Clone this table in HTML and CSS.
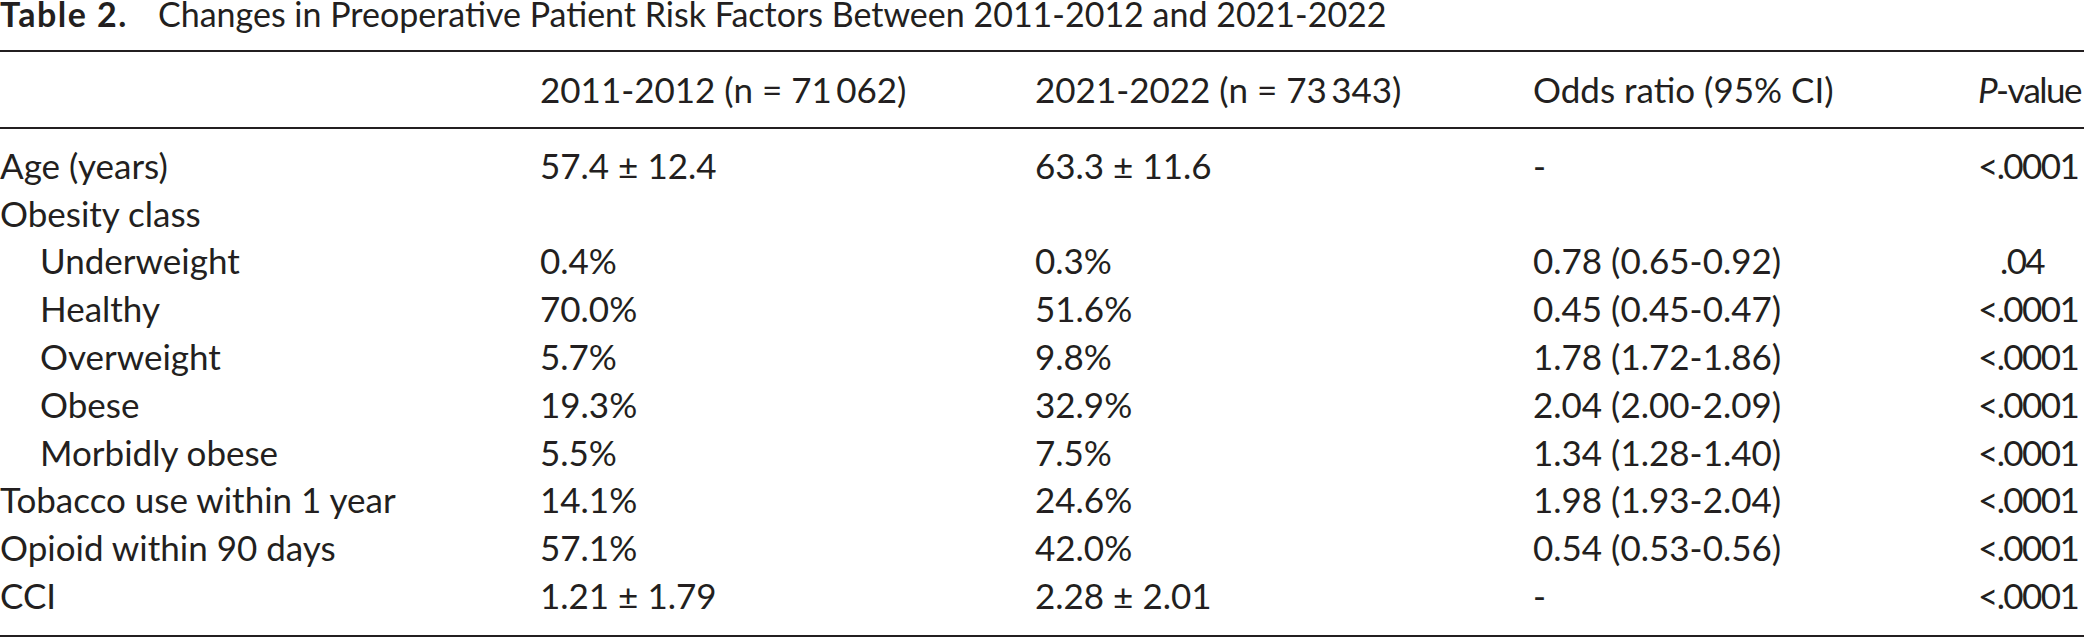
FILE: index.html
```html
<!DOCTYPE html>
<html lang="en">
<head>
<meta charset="utf-8">
<title>Table 2</title>
<link rel="stylesheet" href="styles.css">
</head>
<body>
<div class="page">
  <p class="caption"><span class="label">Table 2.</span><span class="caption-text">Changes in Preoperative Patient Risk Factors Between 2011-2012 and 2021-2022</span></p>
  <table class="data">
    <colgroup>
      <col class="c1"><col class="c2"><col class="c3"><col class="c4"><col class="c5">
    </colgroup>
    <thead>
      <tr>
        <th></th>
        <th>2011-2012 (n = 71&#8201;062)</th>
        <th>2021-2022 (n = 73&#8201;343)</th>
        <th>Odds ratio (95% CI)</th>
        <th class="pv"><i>P</i>-value</th>
      </tr>
    </thead>
    <tbody>
      <tr><td>Age (years)</td><td>57.4 ± 12.4</td><td>63.3 ± 11.6</td><td>-</td><td class="pv">&lt;.0001</td></tr>
      <tr><td>Obesity class</td><td></td><td></td><td></td><td class="pv"></td></tr>
      <tr><td class="sub">Underweight</td><td>0.4%</td><td>0.3%</td><td>0.78 (0.65-0.92)</td><td class="pv short">.04</td></tr>
      <tr><td class="sub">Healthy</td><td>70.0%</td><td>51.6%</td><td>0.45 (0.45-0.47)</td><td class="pv">&lt;.0001</td></tr>
      <tr><td class="sub">Overweight</td><td>5.7%</td><td>9.8%</td><td>1.78 (1.72-1.86)</td><td class="pv">&lt;.0001</td></tr>
      <tr><td class="sub">Obese</td><td>19.3%</td><td>32.9%</td><td>2.04 (2.00-2.09)</td><td class="pv">&lt;.0001</td></tr>
      <tr><td class="sub">Morbidly obese</td><td>5.5%</td><td>7.5%</td><td>1.34 (1.28-1.40)</td><td class="pv">&lt;.0001</td></tr>
      <tr><td>Tobacco use within 1 year</td><td>14.1%</td><td>24.6%</td><td>1.98 (1.93-2.04)</td><td class="pv">&lt;.0001</td></tr>
      <tr><td>Opioid within 90 days</td><td>57.1%</td><td>42.0%</td><td>0.54 (0.53-0.56)</td><td class="pv">&lt;.0001</td></tr>
      <tr><td>CCI</td><td>1.21 ± 1.79</td><td>2.28 ± 2.01</td><td>-</td><td class="pv">&lt;.0001</td></tr>
    </tbody>
  </table>
</div>
</body>
</html>
```

FILE: styles.css
```css
html, body {
  margin: 0;
  padding: 0;
  background: #ffffff;
}

body {
  font-family: "Lato", "Liberation Sans", sans-serif;
  color: #231f20;
}

.page {
  width: 2084px;
}

.caption {
  margin: 0 0 22px 0;
  font-size: 34px;
  line-height: 28px;
  height: 28px;
  white-space: nowrap;
}

.caption .label,
.caption .caption-text {
  display: inline-block;
  line-height: 28px;
  height: 28px;
  vertical-align: top;
}

.caption .label {
  font-weight: 700;
  letter-spacing: 1.5px;
  width: 158px;
}

.data {
  width: 2084px;
  border-collapse: collapse;
  table-layout: fixed;
  font-size: 35px;
  line-height: 47.8px;
}

.c1 { width: 540px; }
.c2 { width: 495px; }
.c3 { width: 498px; }
.c4 { width: 441px; }
.c5 { width: 110px; }

.data th,
.data td {
  padding: 0;
  text-align: left;
  vertical-align: top;
  white-space: nowrap;
  font-weight: 400;
}

.data thead th {
  border-top: 2px solid #231f20;
  border-bottom: 2px solid #231f20;
  padding-top: 14px;
  padding-bottom: 13px;
}

.data tbody tr:first-child td {
  padding-top: 13px;
}

.data tbody tr:last-child td {
  padding-bottom: 15px;
  border-bottom: 2px solid #231f20;
}

.data td.sub {
  padding-left: 40px;
}

.data .pv {
  letter-spacing: -1.6px;
  padding-left: 4px;
}

.data td.short {
  padding-left: 26px;
}
```
